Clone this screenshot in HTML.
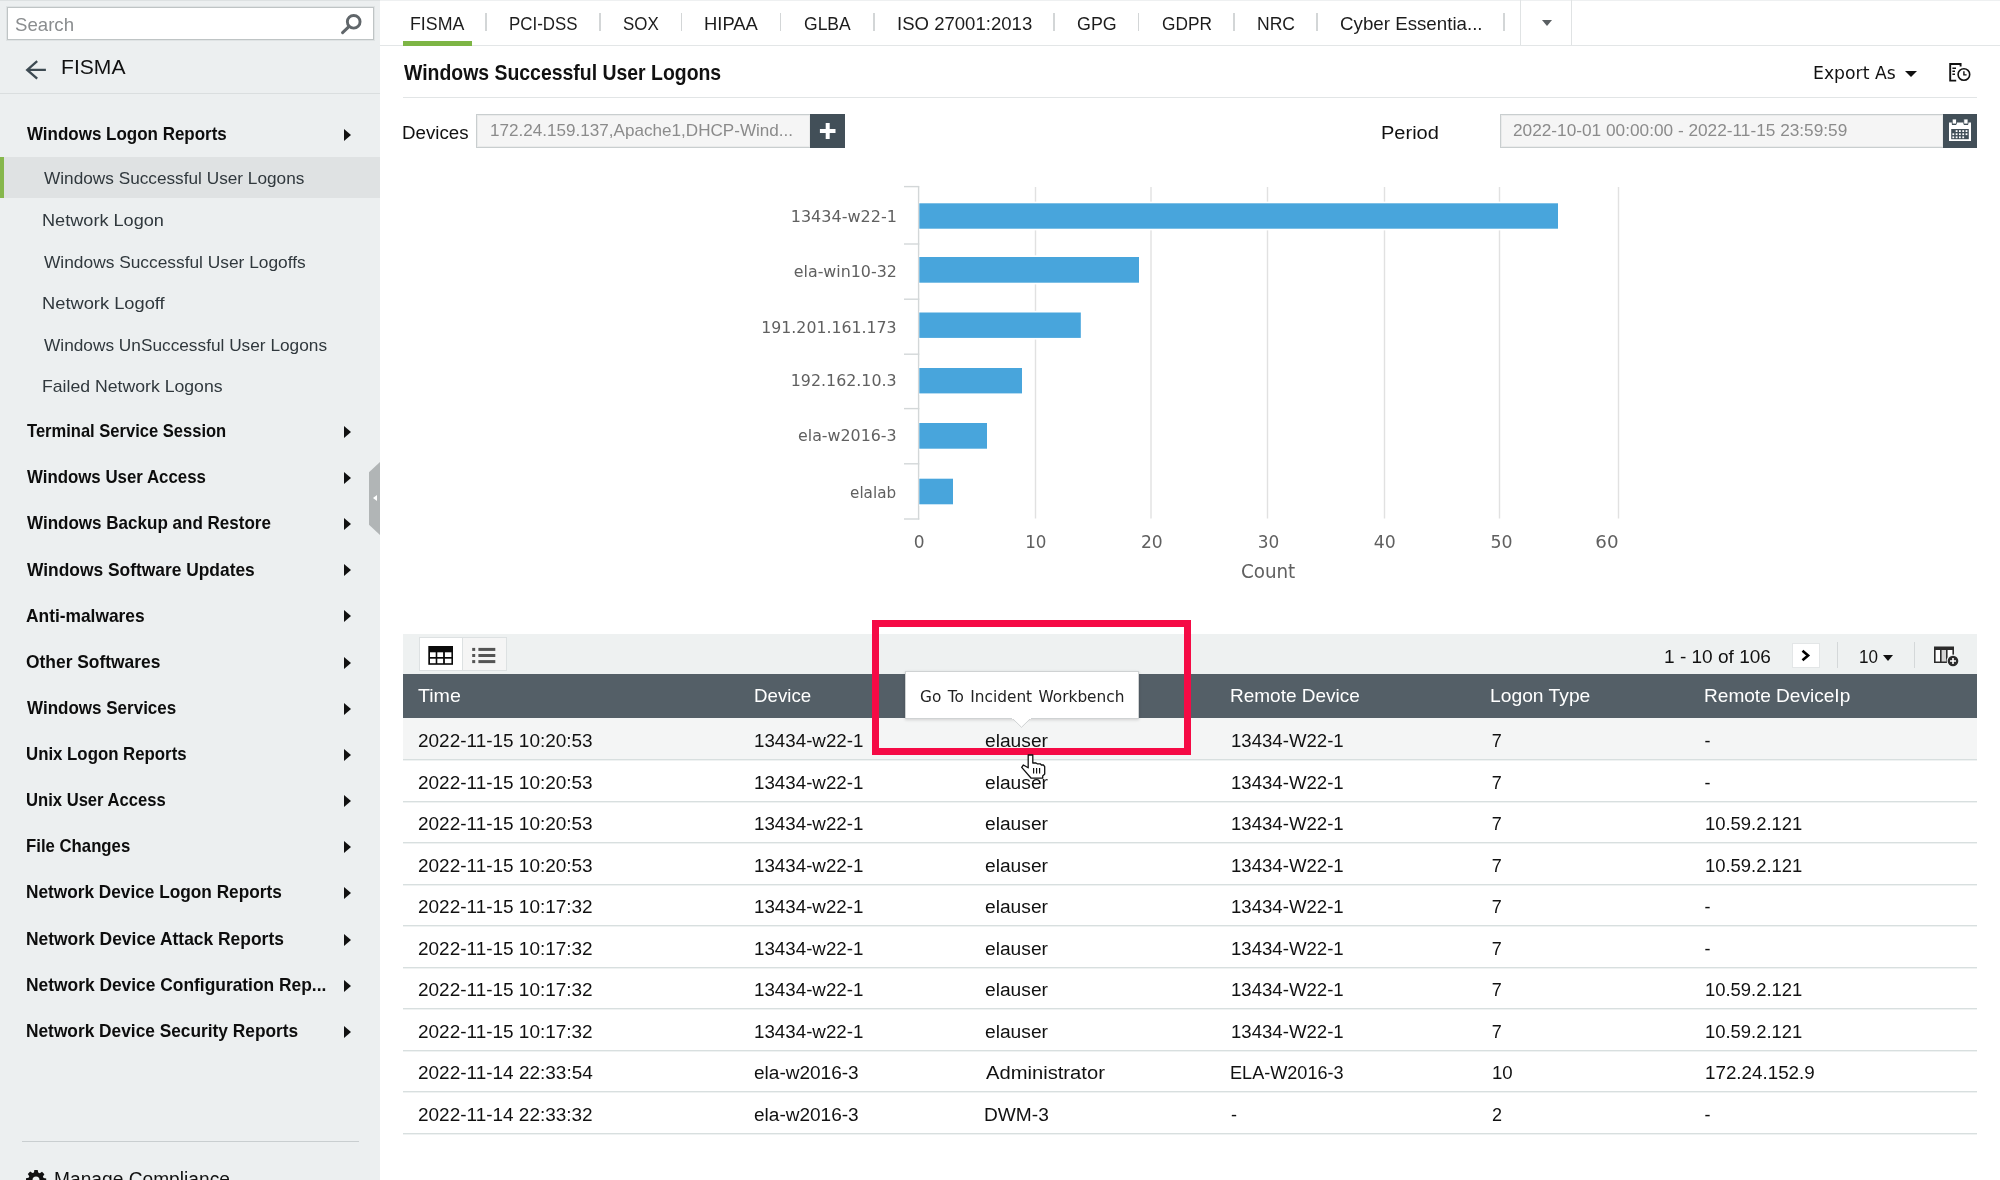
<!DOCTYPE html><html lang="en"><head><meta charset="utf-8"><title>Windows Successful User Logons - FISMA</title><style>
*{box-sizing:border-box;margin:0;padding:0}
html,body{width:2000px;height:1180px;overflow:hidden;background:#fff}
body{position:relative;will-change:transform;font-family:"Liberation Sans",Arial,sans-serif;color:#111}
.a,.t{position:absolute}
.t{white-space:nowrap;line-height:1;transform-origin:0 0;display:block;font-weight:normal;text-decoration:none}
.d{font-family:"DejaVu Sans",Verdana,sans-serif}
.t.b{font-weight:bold}
ul{list-style:none}
svg{position:absolute;overflow:visible}
svg text{font-family:"DejaVu Sans",Verdana,sans-serif;fill:#606060}
#sidebar{left:0;top:0;width:380px;height:1180px;background:#eceff0}
#search{left:7px;top:7px;width:367px;height:33px;background:#fff;border:1px solid #bfc4c5;box-shadow:0 0 0 1px rgba(200,205,206,.35)}
#backrow{left:0;top:40px;width:380px;height:54px;border-bottom:1px solid #dadedf}
.sel{left:0;top:157px;width:380px;height:41px;background:#dfe2e3;border-left:4.5px solid #86b74c}
.arr{width:0;height:0;border-left:7px solid #111;border-top:6px solid transparent;border-bottom:6px solid transparent;left:344px}
#handle{left:369px;top:462px;width:11px;height:73px;background:#b1b5b6;clip-path:polygon(100% 0,100% 100%,0 86%,0 14%)}
#handle i{position:absolute;left:4px;top:33px;border-right:4px solid #fff;border-top:3.5px solid transparent;border-bottom:3.5px solid transparent}
#sideline{left:22px;top:1141px;width:337px;height:1px;background:#c9ced0}
#main{left:380px;top:0;width:1620px;height:1180px}
#tabs{left:0;top:0;width:1620px;height:46px;border-bottom:1.5px solid #e3e6e7}
.sep{top:13px;width:1.5px;height:18px;background:#d3d6d7}
#tabul{left:23px;top:41px;width:69px;height:5px;background:#7db545}
#more{left:1140px;top:0;width:52px;height:45px;border-left:1px solid #e0e3e4;border-right:1px solid #e0e3e4}
#more i{position:absolute;left:20.5px;top:20px;border-top:6px solid #5a5f62;border-left:5.5px solid transparent;border-right:5.5px solid transparent}
#titleline{left:23px;top:97px;width:1574px;height:1px;background:#e2e5e6}
.inp{top:114px;height:34px;background:#f5f5f5;border:1px solid #c9cecf;box-shadow:inset 0 0 0 1px rgba(208,212,213,.3)}
.dbtn{top:114px;width:35px;height:34px;background:#424f58}
.caret{width:0;height:0;border-top:6.5px solid #111;border-left:6px solid transparent;border-right:6px solid transparent}
#tbar{left:23px;top:634px;width:1574px;height:40px;background:#eef1f1}
#thead{left:23px;top:674px;width:1574px;height:44px;background:#545f67;color:#fff}
.tr{left:23px;width:1574px;border-bottom:1px solid #d8dfdf;box-shadow:0 1px 0 rgba(216,223,223,.4)}
.tr.hov{background:#f4f5f5}
#toggle{left:39px;top:637px;width:88px;height:34px;background:#f5f5f5;border:1px solid #dde1e2}
#toggle b{position:absolute;left:0;top:0;width:43px;height:32px;background:#fff;border-right:1px solid #dde1e2}
#next{left:1411.5px;top:642.5px;width:28px;height:25px;background:#fff;border:1px solid #e3e6e7}
.vsep{top:642px;width:1.5px;height:25.5px;background:#d4d8d9}
#redbox{left:872px;top:620px;width:319.5px;height:135.3px;border:7.6px solid #f50a45}
#tip{left:905px;top:671px;width:234px;height:48px;background:#fff;border:1px solid #cfd2d3;box-shadow:0 1px 3px rgba(0,0,0,.15)}
#tiparrow{left:1012px;top:718px;width:19px;height:10px}
</style></head><body>
<aside id="sidebar" class="a">
<div class="a" style="left:0;top:0;width:380px;height:1.2px;background:#dde1e2"></div>
<div id="search" class="a">
<span class="t" style="left:7.02px;top:8px;font-size:18.5px;transform:scaleX(1.0070);color:#8a8d8f">Search</span>
<svg style="left:0;top:0" width="364" height="30" viewBox="8 8 364 30"><circle cx="353.7" cy="21.8" r="6.35" fill="none" stroke="#60666a" stroke-width="2.9"/><path d="M348.9 26.6 L342.6 32.7" stroke="#60666a" stroke-width="3" stroke-linecap="round"/></svg>
</div>
<div id="backrow" class="a">
<svg style="left:0;top:0" width="380" height="54" viewBox="0 40 380 54"><path d="M45.9 69.9 H27.6 M37.2 61.2 L27.2 69.9 L37.2 78.6" fill="none" stroke="#3d4a52" stroke-width="2.3"/></svg>
<h2 class="t" style="left:60.85px;top:16px;font-size:21px;transform:scaleX(1.0043);color:#111">FISMA</h2>
</div>
<div class="a sel"></div>
<ul>
<li><span class="t b" style="left:26.7px;top:126px;font-size:17.8px;transform:scaleX(0.9548);color:#0d0d0d">Windows Logon Reports</span><i class="a arr" style="top:128.8px"></i>
<ul>
<li><span class="t" style="left:43.6px;top:170px;font-size:16.2px;transform:scaleX(1.0638);color:#30383d">Windows Successful User Logons</span></li>
<li><span class="t" style="left:42.18px;top:212px;font-size:16.2px;transform:scaleX(1.1200);color:#30383d">Network Logon</span></li>
<li><span class="t" style="left:43.6px;top:254px;font-size:16.2px;transform:scaleX(1.0709);color:#30383d">Windows Successful User Logoffs</span></li>
<li><span class="t" style="left:42.17px;top:295px;font-size:16.2px;transform:scaleX(1.1298);color:#30383d">Network Logoff</span></li>
<li><span class="t" style="left:43.6px;top:337px;font-size:16.2px;transform:scaleX(1.0664);color:#30383d">Windows UnSuccessful User Logons</span></li>
<li><span class="t" style="left:42.22px;top:378px;font-size:16.2px;transform:scaleX(1.0908);color:#30383d">Failed Network Logons</span></li>
</ul>
</li>
<li><span class="t b" style="left:26.7px;top:423px;font-size:17.8px;transform:scaleX(0.9302);color:#0d0d0d">Terminal Service Session</span><i class="a arr" style="top:425.8px"></i>
</li>
<li><span class="t b" style="left:26.7px;top:469px;font-size:17.8px;transform:scaleX(0.9468);color:#0d0d0d">Windows User Access</span><i class="a arr" style="top:472px"></i>
</li>
<li><span class="t b" style="left:26.7px;top:515px;font-size:17.8px;transform:scaleX(0.9577);color:#0d0d0d">Windows Backup and Restore</span><i class="a arr" style="top:518.1px"></i>
</li>
<li><span class="t b" style="left:26.7px;top:562px;font-size:17.8px;transform:scaleX(0.9775);color:#0d0d0d">Windows Software Updates</span><i class="a arr" style="top:564.3px"></i>
</li>
<li><span class="t b" style="left:26.43px;top:608px;font-size:17.8px;transform:scaleX(0.9762);color:#0d0d0d">Anti-malwares</span><i class="a arr" style="top:610.4px"></i>
</li>
<li><span class="t b" style="left:26.16px;top:654px;font-size:17.8px;transform:scaleX(0.9786);color:#0d0d0d">Other Softwares</span><i class="a arr" style="top:656.6px"></i>
</li>
<li><span class="t b" style="left:26.7px;top:700px;font-size:17.8px;transform:scaleX(0.9568);color:#0d0d0d">Windows Services</span><i class="a arr" style="top:702.7px"></i>
</li>
<li><span class="t b" style="left:25.91px;top:746px;font-size:17.8px;transform:scaleX(0.9453);color:#0d0d0d">Unix Logon Reports</span><i class="a arr" style="top:748.9px"></i>
</li>
<li><span class="t b" style="left:25.92px;top:792px;font-size:17.8px;transform:scaleX(0.9346);color:#0d0d0d">Unix User Access</span><i class="a arr" style="top:795px"></i>
</li>
<li><span class="t b" style="left:25.65px;top:838px;font-size:17.8px;transform:scaleX(0.9417);color:#0d0d0d">File Changes</span><i class="a arr" style="top:840.9px"></i>
</li>
<li><span class="t b" style="left:25.62px;top:884px;font-size:17.8px;transform:scaleX(0.9697);color:#0d0d0d">Network Device Logon Reports</span><i class="a arr" style="top:887.2px"></i>
</li>
<li><span class="t b" style="left:25.61px;top:931px;font-size:17.8px;transform:scaleX(0.9798);color:#0d0d0d">Network Device Attack Reports</span><i class="a arr" style="top:933.5px"></i>
</li>
<li><span class="t b" style="left:25.61px;top:977px;font-size:17.8px;transform:scaleX(0.9773);color:#0d0d0d">Network Device Configuration Rep...</span><i class="a arr" style="top:979.6px"></i>
</li>
<li><span class="t b" style="left:25.62px;top:1023px;font-size:17.8px;transform:scaleX(0.9733);color:#0d0d0d">Network Device Security Reports</span><i class="a arr" style="top:1025.8px"></i>
</li>
</ul>
<div id="handle" class="a"><i></i></div>
<div id="sideline" class="a"></div>
<svg style="left:26px;top:1170px" width="20" height="20" viewBox="0 0 20 20"><path fill="#111" d="M8.3 0h3.4l.5 2.6 1.6.7 2.2-1.5 2.4 2.4-1.5 2.2.7 1.6 2.6.5v3.4l-2.6.5-.7 1.6 1.5 2.2-2.4 2.4-2.2-1.5-1.6.7-.5 2.6H8.3l-.5-2.6-1.6-.7-2.2 1.5-2.4-2.4 1.5-2.2-.7-1.6L0 11.700V8.300l2.600-.5.7-1.600L1.800 4l2.400-2.400 2.200 1.500 1.600-.7zM10 6.500a3.500 3.500 0 100 7 3.500 3.500 0 000-7z"/></svg>
<span class="t" style="left:53.5px;top:1170px;font-size:19.5px;transform:scaleX(0.9834);color:#111">Manage Compliance</span>
</aside>
<main id="main" class="a">
<div class="a" style="left:0;top:0;width:1620px;height:1.2px;background:#eef0f1"></div>
<nav id="tabs" class="a">
<a class="t" style="left:29.61px;top:14px;font-size:19px;transform:scaleX(0.9353);color:#1c1c1c">FISMA</a><i class="a sep" style="left:105.25px"></i>
<a class="t" style="left:129.18px;top:14px;font-size:19px;transform:scaleX(0.8892);color:#1c1c1c">PCI-DSS</a><i class="a sep" style="left:219.25px"></i>
<a class="t" style="left:243.47px;top:14px;font-size:19px;transform:scaleX(0.8900);color:#1c1c1c">SOX</a><i class="a sep" style="left:300.75px"></i>
<a class="t" style="left:324.06px;top:14px;font-size:19px;transform:scaleX(0.9683);color:#1c1c1c">HIPAA</a><i class="a sep" style="left:399.75px"></i>
<a class="t" style="left:424.18px;top:14px;font-size:19px;transform:scaleX(0.9220);color:#1c1c1c">GLBA</a><i class="a sep" style="left:493.25px"></i>
<a class="t" style="left:516.55px;top:14px;font-size:19px;transform:scaleX(0.9770);color:#1c1c1c">ISO 27001:2013</a><i class="a sep" style="left:673.25px"></i>
<a class="t" style="left:697.16px;top:14px;font-size:19px;transform:scaleX(0.9394);color:#1c1c1c">GPG</a><i class="a sep" style="left:757.75px"></i>
<a class="t" style="left:781.69px;top:14px;font-size:19px;transform:scaleX(0.9092);color:#1c1c1c">GDPR</a><i class="a sep" style="left:853.25px"></i>
<a class="t" style="left:876.63px;top:14px;font-size:19px;transform:scaleX(0.9226);color:#1c1c1c">NRC</a><i class="a sep" style="left:936.25px"></i>
<a class="t" style="left:960.12px;top:14px;font-size:19px;transform:scaleX(0.9855);color:#1c1c1c">Cyber Essentia...</a><i class="a sep" style="left:1123.25px"></i>
<div id="tabul" class="a"></div>
<div id="more" class="a"><i></i></div>
</nav>
<h1 class="t b" style="left:23.6px;top:62px;font-size:22px;transform:scaleX(0.8830);color:#111">Windows Successful User Logons</h1>
<span class="t d" style="left:1432.98px;top:65px;font-size:17px;transform:scaleX(1.0136);color:#111">Export As</span>
<i class="a caret" style="left:1525px;top:70.7px"></i>
<svg style="left:1568px;top:62px" width="24" height="21" viewBox="1948 62 24 21"><path d="M1960.6 66.5 V64 H1950.2 V80.6 H1956.2" fill="none" stroke="#111" stroke-width="1.9"/><path d="M1952.4 68.2h3.6M1952.4 71.2h2.6M1952.4 74.2h2.6" stroke="#111" stroke-width="1.4"/><circle cx="1963.9" cy="74.5" r="5.8" fill="#fff" stroke="#111" stroke-width="1.6"/><path d="M1963.9 71.2 V74.9 H1966.6" fill="none" stroke="#111" stroke-width="1.4"/></svg>
<div id="titleline" class="a"></div>
<label class="t" style="left:22.29px;top:124px;font-size:18px;transform:scaleX(1.0395);color:#111">Devices</label>
<div class="a inp" style="left:96px;width:335px">
<span class="t" style="left:12.68px;top:7px;font-size:17px;transform:scaleX(1.0055);color:#8b8b8b">172.24.159.137,Apache1,DHCP-Wind...</span>
</div>
<div class="a dbtn" style="left:430px"><svg style="left:0;top:0" width="35" height="34" viewBox="810 114 35 34"><path d="M819.9 131 H835.5 M827.7 122.9 V138.9" stroke="#fff" stroke-width="4"/></svg></div>
<label class="t" style="left:1000.94px;top:124px;font-size:18px;transform:scaleX(1.1126);color:#111">Period</label>
<div class="a inp" style="left:1120px;width:444px">
<span class="t" style="left:12.44px;top:7px;font-size:17px;transform:scaleX(1.0143);color:#8b8b8b">2022-10-01 00:00:00 - 2022-11-15 23:59:59</span>
</div>
<div class="a dbtn" style="left:1563px;width:34px"><svg style="left:0;top:0" width="35" height="34" viewBox="1943 114 35 34"><path fill="#fff" d="M1949 122.5 h3 v2.5 h4 v-2.5 h8 v2.500 h4 v-2.500 h3 v18.500 h-22z"/><rect x="1951.2" y="129" width="17.6" height="10.2" fill="#424f58"/><rect x="1952.2" y="119" width="4.2" height="5" fill="#fff" stroke="#424f58" stroke-width=".8"/><rect x="1963.800" y="119" width="4.200" height="5" fill="#fff" stroke="#424f58" stroke-width=".8"/><rect x="1955.7" y="130.2" width="1.8" height="1.800" fill="#fff"/><rect x="1959" y="130.2" width="1.8" height="1.800" fill="#fff"/><rect x="1962.3" y="130.2" width="1.8" height="1.800" fill="#fff"/><rect x="1965.6" y="130.2" width="1.8" height="1.800" fill="#fff"/><rect x="1952.4" y="133.3" width="1.8" height="1.800" fill="#fff"/><rect x="1955.7" y="133.3" width="1.8" height="1.800" fill="#fff"/><rect x="1959" y="133.3" width="1.8" height="1.800" fill="#fff"/><rect x="1962.3" y="133.3" width="1.8" height="1.800" fill="#fff"/><rect x="1965.6" y="133.3" width="1.8" height="1.800" fill="#fff"/><rect x="1952.4" y="136.4" width="1.8" height="1.800" fill="#fff"/><rect x="1955.7" y="136.4" width="1.8" height="1.800" fill="#fff"/><rect x="1959" y="136.4" width="1.8" height="1.800" fill="#fff"/><rect x="1962.3" y="136.4" width="1.8" height="1.800" fill="#fff"/></svg></div>
<section id="chart" class="a" style="left:0;top:160px;width:1620px;height:450px">
<svg style="left:0;top:0" width="1620" height="450" viewBox="380 160 1620 450">
<path d="M1035.5 187 V518.5" stroke="#e1e1e1" stroke-width="1.4"/>
<path d="M1151 187 V518.5" stroke="#e1e1e1" stroke-width="1.4"/>
<path d="M1267.5 187 V518.5" stroke="#e1e1e1" stroke-width="1.4"/>
<path d="M1384.5 187 V518.5" stroke="#e1e1e1" stroke-width="1.4"/>
<path d="M1499.5 187 V518.5" stroke="#e1e1e1" stroke-width="1.4"/>
<path d="M1618.5 187 V518.5" stroke="#e1e1e1" stroke-width="1.4"/>
<path d="M918.6 186.500 V519.500" stroke="#d3d7d8" stroke-width="1.4"/>
<path d="M904 186.6 H919.3" stroke="#d3d7d8" stroke-width="1.4"/>
<path d="M904 244 H919.3" stroke="#d3d7d8" stroke-width="1.4"/>
<path d="M904 299.2 H919.3" stroke="#d3d7d8" stroke-width="1.4"/>
<path d="M904 354.2 H919.3" stroke="#d3d7d8" stroke-width="1.4"/>
<path d="M904 408.6 H919.3" stroke="#d3d7d8" stroke-width="1.4"/>
<path d="M904 463.8 H919.3" stroke="#d3d7d8" stroke-width="1.4"/>
<path d="M904 519 H919.3" stroke="#d3d7d8" stroke-width="1.4"/>
<rect x="919.3" y="201.6" width="640.4" height="28.8" fill="#fff"/><rect x="919.3" y="203.3" width="638.7" height="25.4" fill="#48a5dc"/>
<rect x="919.3" y="255.3" width="221.4" height="29.1" fill="#fff"/><rect x="919.3" y="257" width="219.7" height="25.7" fill="#48a5dc"/>
<rect x="919.3" y="310.8" width="163.2" height="28.8" fill="#fff"/><rect x="919.3" y="312.5" width="161.5" height="25.4" fill="#48a5dc"/>
<rect x="919.3" y="366.3" width="104.4" height="28.8" fill="#fff"/><rect x="919.3" y="368" width="102.7" height="25.4" fill="#48a5dc"/>
<rect x="919.3" y="421.3" width="69.4" height="29.1" fill="#fff"/><rect x="919.3" y="423" width="67.7" height="25.7" fill="#48a5dc"/>
<rect x="919.3" y="477" width="35.4" height="29" fill="#fff"/><rect x="919.3" y="478.7" width="33.7" height="25.6" fill="#48a5dc"/>
<text transform="translate(790.75 222) scale(0.9707 1)" font-size="16.5">13434-w22-1</text>
<text transform="translate(793.76 277) scale(0.9616 1)" font-size="16.5">ela-win10-32</text>
<text transform="translate(761.28 332.5) scale(0.9554 1)" font-size="16.5">191.201.161.173</text>
<text transform="translate(790.77 386.3) scale(0.9609 1)" font-size="16.5">192.162.10.3</text>
<text transform="translate(798.01 441.3) scale(0.9603 1)" font-size="16.5">ela-w2016-3</text>
<text transform="translate(850.04 497.5) scale(0.9214 1)" font-size="16.5">elalab</text>
<text transform="translate(913.68 548) scale(1.0000 1)" font-size="17">0</text>
<text transform="translate(1025.17 548) scale(0.9848 1)" font-size="17">10</text>
<text transform="translate(1140.93 548) scale(1.0086 1)" font-size="17">20</text>
<text transform="translate(1257.69 548) scale(0.9958 1)" font-size="17">30</text>
<text transform="translate(1373.79 548) scale(1.0178 1)" font-size="17">40</text>
<text transform="translate(1490.41 548) scale(1.0214 1)" font-size="17">50</text>
<text transform="translate(1595.36 548) scale(1.0724 1)" font-size="17">60</text>
<text transform="translate(1240.89 577.5) scale(0.9645 1)" font-size="19">Count</text>
</svg></section>
<div id="tbar" class="a"></div>
<div id="toggle" class="a"><b></b>
<svg style="left:0;top:0" width="86" height="32" viewBox="420 638 86 32"><rect x="428.3" y="646" width="24.7" height="18.8" fill="#0a0a0a"/><rect x="430" y="652.3" width="5.7" height="4.7" fill="#fff"/><rect x="430" y="658.7" width="5.7" height="4.5" fill="#fff"/><rect x="437.3" y="652.3" width="5.8" height="4.7" fill="#fff"/><rect x="437.3" y="658.7" width="5.8" height="4.5" fill="#fff"/><rect x="444.9" y="652.3" width="6.5" height="4.7" fill="#fff"/><rect x="444.9" y="658.7" width="6.5" height="4.5" fill="#fff"/><rect x="472.2" y="647.9" width="3" height="3" fill="#555"/><rect x="478.400" y="647.9" width="16.900" height="3" fill="#555"/><rect x="472.2" y="654" width="3" height="3" fill="#555"/><rect x="478.400" y="654" width="16.900" height="3" fill="#555"/><rect x="472.2" y="660.1" width="3" height="3" fill="#555"/><rect x="478.400" y="660.1" width="16.900" height="3" fill="#555"/></svg></div>
<span class="t" style="left:1284.21px;top:647px;font-size:19px;transform:scaleX(1.0026);color:#111">1 - 10 of 106</span>
<div id="next" class="a"><svg style="left:0;top:0" width="26" height="23" viewBox="1792.5 643.5 26 23"><path d="M1802 650.2 L1807.6 655 L1802 659.800" fill="none" stroke="#000" stroke-width="2.6"/></svg></div>
<i class="a vsep" style="left:1456.8px"></i>
<span class="t" style="left:1478.93px;top:649px;font-size:17.5px;transform:scaleX(0.9757);color:#111">10</span>
<i class="a caret" style="left:1503px;top:654.5px;border-top-width:6px;border-left-width:5.8px;border-right-width:5.800px"></i>
<i class="a vsep" style="left:1533.7px"></i>
<svg style="left:1553px;top:645px" width="28" height="24" viewBox="1933 645 28 24"><rect x="1934" y="646.5" width="20" height="16.5" fill="#2b2b2b"/><rect x="1935.6" y="650" width="4.4" height="11.500" fill="#fff"/><rect x="1941.600" y="650" width="4.400" height="11.500" fill="#d4d4d4"/><rect x="1947.600" y="650" width="4.800" height="11.500" fill="#fff"/><circle cx="1953" cy="661" r="6.4" fill="#eef1f1"/><circle cx="1953" cy="661" r="5.300" fill="#2b2b2b"/><path d="M1950 661 h6 M1953 658 v6" stroke="#fff" stroke-width="1.6"/></svg>
<div id="thead" class="a">
<span class="t" style="left:15.44px;top:12px;font-size:19px;transform:scaleX(1.0322);color:#fff">Time</span>
<span class="t" style="left:350.54px;top:12px;font-size:19px;transform:scaleX(0.9853);color:#fff">Device</span>
<span class="t" style="left:581.81px;top:12px;font-size:19px;transform:scaleX(1.0042);color:#fff">User</span>
<span class="t" style="left:826.72px;top:12px;font-size:19px;transform:scaleX(0.9998);color:#fff">Remote Device</span>
<span class="t" style="left:1087.49px;top:12px;font-size:19px;transform:scaleX(1.0139);color:#fff">Logon Type</span>
<span class="t" style="left:1300.51px;top:12px;font-size:19px;transform:scaleX(1.0037);color:#fff">Remote DeviceIp</span>
</div>
<div class="a tr hov" style="top:718px;height:42px">
<span class="t" style="left:15.11px;top:14px;font-size:18px;transform:scaleX(1.0534);color:#111">2022-11-15 10:20:53</span>
<span class="t" style="left:350.83px;top:14px;font-size:18px;transform:scaleX(1.0415);color:#111">13434-w22-1</span>
<span class="t" style="left:582.4px;top:14px;font-size:18px;transform:scaleX(1.0662);color:#111">elauser</span>
<span class="t" style="left:827.59px;top:14px;font-size:18px;transform:scaleX(1.0330);color:#111">13434-W22-1</span>
<span class="t" style="left:1088.64px;top:14px;font-size:18px;transform:scaleX(1.0000);color:#111">7</span>
<span class="t" style="left:1301.4px;top:14px;font-size:18px;transform:scaleX(1.0000);color:#111">-</span>
</div>
<div class="a tr" style="top:760px;height:42px">
<span class="t" style="left:15.11px;top:14px;font-size:18px;transform:scaleX(1.0534);color:#111">2022-11-15 10:20:53</span>
<span class="t" style="left:350.83px;top:14px;font-size:18px;transform:scaleX(1.0415);color:#111">13434-w22-1</span>
<span class="t" style="left:582.4px;top:14px;font-size:18px;transform:scaleX(1.0662);color:#111">elauser</span>
<span class="t" style="left:827.59px;top:14px;font-size:18px;transform:scaleX(1.0330);color:#111">13434-W22-1</span>
<span class="t" style="left:1088.64px;top:14px;font-size:18px;transform:scaleX(1.0000);color:#111">7</span>
<span class="t" style="left:1301.4px;top:14px;font-size:18px;transform:scaleX(1.0000);color:#111">-</span>
</div>
<div class="a tr" style="top:802px;height:41px">
<span class="t" style="left:15.11px;top:13px;font-size:18px;transform:scaleX(1.0534);color:#111">2022-11-15 10:20:53</span>
<span class="t" style="left:350.83px;top:13px;font-size:18px;transform:scaleX(1.0415);color:#111">13434-w22-1</span>
<span class="t" style="left:582.4px;top:13px;font-size:18px;transform:scaleX(1.0662);color:#111">elauser</span>
<span class="t" style="left:827.59px;top:13px;font-size:18px;transform:scaleX(1.0330);color:#111">13434-W22-1</span>
<span class="t" style="left:1088.64px;top:13px;font-size:18px;transform:scaleX(1.0000);color:#111">7</span>
<span class="t" style="left:1301.75px;top:13px;font-size:18px;transform:scaleX(1.0232);color:#111">10.59.2.121</span>
</div>
<div class="a tr" style="top:843px;height:42px">
<span class="t" style="left:15.11px;top:14px;font-size:18px;transform:scaleX(1.0534);color:#111">2022-11-15 10:20:53</span>
<span class="t" style="left:350.83px;top:14px;font-size:18px;transform:scaleX(1.0415);color:#111">13434-w22-1</span>
<span class="t" style="left:582.4px;top:14px;font-size:18px;transform:scaleX(1.0662);color:#111">elauser</span>
<span class="t" style="left:827.59px;top:14px;font-size:18px;transform:scaleX(1.0330);color:#111">13434-W22-1</span>
<span class="t" style="left:1088.64px;top:14px;font-size:18px;transform:scaleX(1.0000);color:#111">7</span>
<span class="t" style="left:1301.75px;top:14px;font-size:18px;transform:scaleX(1.0232);color:#111">10.59.2.121</span>
</div>
<div class="a tr" style="top:885px;height:41px">
<span class="t" style="left:15.11px;top:13px;font-size:18px;transform:scaleX(1.0534);color:#111">2022-11-15 10:17:32</span>
<span class="t" style="left:350.83px;top:13px;font-size:18px;transform:scaleX(1.0415);color:#111">13434-w22-1</span>
<span class="t" style="left:582.4px;top:13px;font-size:18px;transform:scaleX(1.0662);color:#111">elauser</span>
<span class="t" style="left:827.59px;top:13px;font-size:18px;transform:scaleX(1.0330);color:#111">13434-W22-1</span>
<span class="t" style="left:1088.64px;top:13px;font-size:18px;transform:scaleX(1.0000);color:#111">7</span>
<span class="t" style="left:1301.4px;top:13px;font-size:18px;transform:scaleX(1.0000);color:#111">-</span>
</div>
<div class="a tr" style="top:926px;height:42px">
<span class="t" style="left:15.11px;top:14px;font-size:18px;transform:scaleX(1.0534);color:#111">2022-11-15 10:17:32</span>
<span class="t" style="left:350.83px;top:14px;font-size:18px;transform:scaleX(1.0415);color:#111">13434-w22-1</span>
<span class="t" style="left:582.4px;top:14px;font-size:18px;transform:scaleX(1.0662);color:#111">elauser</span>
<span class="t" style="left:827.59px;top:14px;font-size:18px;transform:scaleX(1.0330);color:#111">13434-W22-1</span>
<span class="t" style="left:1088.64px;top:14px;font-size:18px;transform:scaleX(1.0000);color:#111">7</span>
<span class="t" style="left:1301.4px;top:14px;font-size:18px;transform:scaleX(1.0000);color:#111">-</span>
</div>
<div class="a tr" style="top:968px;height:41px">
<span class="t" style="left:15.11px;top:13px;font-size:18px;transform:scaleX(1.0534);color:#111">2022-11-15 10:17:32</span>
<span class="t" style="left:350.83px;top:13px;font-size:18px;transform:scaleX(1.0415);color:#111">13434-w22-1</span>
<span class="t" style="left:582.4px;top:13px;font-size:18px;transform:scaleX(1.0662);color:#111">elauser</span>
<span class="t" style="left:827.59px;top:13px;font-size:18px;transform:scaleX(1.0330);color:#111">13434-W22-1</span>
<span class="t" style="left:1088.64px;top:13px;font-size:18px;transform:scaleX(1.0000);color:#111">7</span>
<span class="t" style="left:1301.75px;top:13px;font-size:18px;transform:scaleX(1.0232);color:#111">10.59.2.121</span>
</div>
<div class="a tr" style="top:1009px;height:42px">
<span class="t" style="left:15.11px;top:14px;font-size:18px;transform:scaleX(1.0534);color:#111">2022-11-15 10:17:32</span>
<span class="t" style="left:350.83px;top:14px;font-size:18px;transform:scaleX(1.0415);color:#111">13434-w22-1</span>
<span class="t" style="left:582.4px;top:14px;font-size:18px;transform:scaleX(1.0662);color:#111">elauser</span>
<span class="t" style="left:827.59px;top:14px;font-size:18px;transform:scaleX(1.0330);color:#111">13434-W22-1</span>
<span class="t" style="left:1088.64px;top:14px;font-size:18px;transform:scaleX(1.0000);color:#111">7</span>
<span class="t" style="left:1301.75px;top:14px;font-size:18px;transform:scaleX(1.0232);color:#111">10.59.2.121</span>
</div>
<div class="a tr" style="top:1051px;height:41px">
<span class="t" style="left:15.11px;top:13px;font-size:18px;transform:scaleX(1.0540);color:#111">2022-11-14 22:33:54</span>
<span class="t" style="left:350.91px;top:13px;font-size:18px;transform:scaleX(1.0566);color:#111">ela-w2016-3</span>
<span class="t" style="left:582.75px;top:13px;font-size:18px;transform:scaleX(1.1209);color:#111">Administrator</span>
<span class="t" style="left:827.34px;top:13px;font-size:18px;transform:scaleX(1.0052);color:#111">ELA-W2016-3</span>
<span class="t" style="left:1088.94px;top:13px;font-size:18px;transform:scaleX(1.0353);color:#111">10</span>
<span class="t" style="left:1301.73px;top:13px;font-size:18px;transform:scaleX(1.0441);color:#111">172.24.152.9</span>
</div>
<div class="a tr" style="top:1092px;height:42px">
<span class="t" style="left:15.11px;top:14px;font-size:18px;transform:scaleX(1.0534);color:#111">2022-11-14 22:33:32</span>
<span class="t" style="left:350.91px;top:14px;font-size:18px;transform:scaleX(1.0566);color:#111">ela-w2016-3</span>
<span class="t" style="left:581.26px;top:14px;font-size:18px;transform:scaleX(1.0620);color:#111">DWM-3</span>
<span class="t" style="left:828.05px;top:14px;font-size:18px;transform:scaleX(1.0000);color:#111">-</span>
<span class="t" style="left:1088.89px;top:14px;font-size:18px;transform:scaleX(1.0000);color:#111">2</span>
<span class="t" style="left:1301.4px;top:14px;font-size:18px;transform:scaleX(1.0000);color:#111">-</span>
</div>
<div id="tip" class="a" style="left:525px">
<span class="t d" style="left:13.68px;top:17px;font-size:16.5px;transform:scaleX(0.9291);color:#222;word-spacing:1.7px">Go To Incident Workbench</span>
</div>
<svg id="tiparrow" class="a" style="left:632px" viewBox="0 0 19 10"><path d="M0 0 L9.5 9.3 L19 0" fill="#fff" stroke="#cfd2d3" stroke-width="1"/><path d="M0 0 H19" stroke="#fff" stroke-width="2"/></svg>
<div id="redbox" class="a" style="left:491.7px"></div>
<svg style="left:640px;top:754px" width="28" height="26" viewBox="1020 754 28 26"><path d="M1028.2 755 h4.6 v8 h3.2 l1.200 .8 h3 l1.200 1.200 h2 l1.300 1.600 v7.400 l-2 2 v2.200 h-11.500 l-9.500 -10.800 l1.700 -2.400 l4.800 2.800z" fill="#fff" stroke="#111" stroke-width="1.3" stroke-linejoin="round"/><path d="M1033.6 768 v5.500 M1036.600 768 v5.500 M1039.600 768 v5.500" stroke="#111" stroke-width="1.2"/></svg>
</main>
</body></html>
